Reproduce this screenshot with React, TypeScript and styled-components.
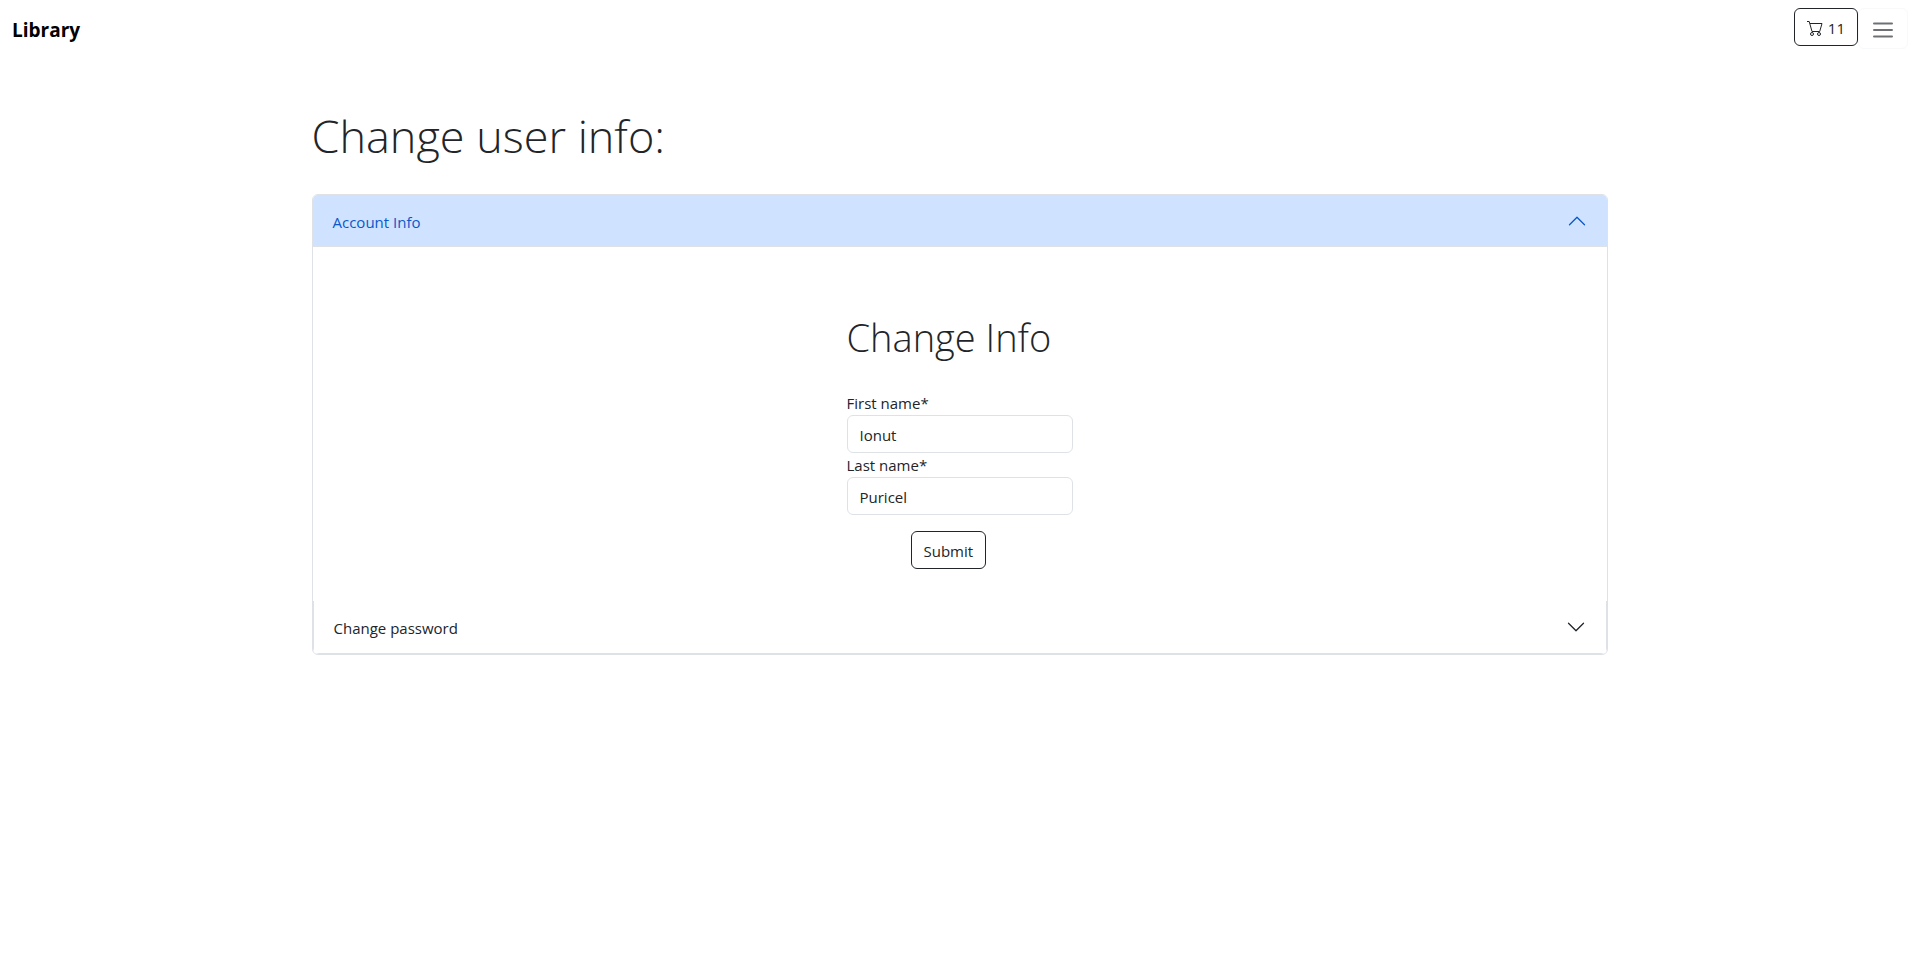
import React, { useState } from "react";
import styled, { createGlobalStyle } from "styled-components";

const GlobalStyle = createGlobalStyle`
  *, *::before, *::after { box-sizing: border-box; }
  body {
    margin: 0;
    background: #fff;
    color: #212529;
    font-family: "Segoe UI", "Open Sans", "Noto Sans", sans-serif;
    font-size: 15px;
    line-height: 24px;
  }
  button, input { font: inherit; color: inherit; }
`;

const Navbar = styled.nav`
  display: flex;
  align-items: flex-start;
  justify-content: space-between;
  padding: 8px 11px 8px 12px;
`;

const Brand = styled.a`
  padding: 6px 0 4px;
  color: #000;
  font-size: 19px;
  line-height: 32px;
  font-weight: 700;
  text-decoration: none;
`;

const NavActions = styled.div`
  display: flex;
  align-items: flex-start;
`;

const OutlineButton = styled.button`
  display: inline-flex;
  align-items: center;
  justify-content: center;
  gap: 5px;
  height: 38px;
  padding: 2px 12px 0;
  border: 1px solid #212529;
  border-radius: 6px;
  background: transparent;
  cursor: pointer;
`;

const Toggler = styled.button`
  display: flex;
  align-items: center;
  justify-content: center;
  width: 50px;
  height: 41px;
  padding: 3px 0 0;
  border: 1px solid #f8f9fa;
  border-radius: 6px;
  background: transparent;
  cursor: pointer;
`;

const Container = styled.main`
  max-width: 1320px;
  margin: 0 auto;
  padding: 50px 12px 48px;
`;

const PageTitle = styled.h1`
  margin: 0 0 30px;
  font-size: 45px;
  line-height: 56px;
  font-weight: 300;
`;

const Accordion = styled.div`
  border: 1px solid #dee2e6;
  border-radius: 6px;
  overflow: hidden;
`;

const AccordionHeading = styled.h2`
  margin: 0;
  font-size: 15px;
  font-weight: 400;
`;

const AccordionButton = styled.button<{ $open: boolean }>`
  display: flex;
  align-items: flex-start;
  justify-content: space-between;
  width: 100%;
  padding: 16px 20px 14px;
  border: 0;
  line-height: 22px;
  text-align: left;
  background: ${(p) => (p.$open ? "#cfe2ff" : "#fff")};
  color: ${(p) => (p.$open ? "#0a58ca" : "#212529")};
  box-shadow: ${(p) => (p.$open ? "inset 0 -1px 0 #dee2e6" : "none")};
  cursor: pointer;

  svg { transform: ${(p) => (p.$open ? "rotate(180deg)" : "none")}; }
`;

const NestedItem = styled.div`
  border: 1px solid #dee2e6;
  border-top: 0;
  border-radius: 0 0 6px 6px;
`;

const AccordionBody = styled.div`
  display: flex;
  justify-content: center;
  padding: 66px 20px 32px;
`;

const Form = styled.form`
  display: flex;
  flex-direction: column;
  width: 226px;
`;

const FormTitle = styled.h2`
  margin: 0 0 30px;
  font-size: 38px;
  line-height: 48px;
  font-weight: 300;
`;

const TextInput = styled.input`
  width: 100%;
  height: 38px;
  padding: 7px 12px 5px;
  border: 1px solid #dee2e6;
  border-radius: 6px;
  background: #fff;
`;

const SubmitRow = styled.div`
  display: flex;
  padding: 16px 64px 0;
`;

const Chevron = () => (
  <svg width="20" height="20" viewBox="0 0 16 16" fill="currentColor" aria-hidden="true">
    <path
      fillRule="evenodd"
      d="M1.646 4.646a.5.5 0 0 1 .708 0L8 10.293l5.646-5.647a.5.5 0 0 1 .708.708l-6 6a.5.5 0 0 1-.708 0l-6-6a.5.5 0 0 1 0-.708z"
    />
  </svg>
);

const CartIcon = () => (
  <svg width="16" height="18" viewBox="0 0 16 18" fill="none" stroke="currentColor" aria-hidden="true">
    <path d="M0 2.5h2.2L5 12.5h7.7L15 4.5H3" />
    <circle cx="5" cy="15" r="1.5" />
    <circle cx="12" cy="15" r="1.5" />
  </svg>
);

const MenuIcon = () => (
  <svg width="26" height="24" viewBox="0 0 26 24" fill="none" aria-hidden="true">
    <path stroke="rgba(33,37,41,.65)" strokeLinecap="round" strokeWidth="2" d="M4 5.5h18M4 12h18M4 18.5h18" />
  </svg>
);

export default function App() {
  const [open, setOpen] = useState("info");
  const toggle = (id: string) => setOpen(open === id ? "" : id);

  return (
    <>
      <GlobalStyle />
      <Navbar>
        <Brand href="#">Library</Brand>
        <NavActions>
          <OutlineButton type="button" aria-label="Cart, 11 items">
            <CartIcon />
            11
          </OutlineButton>
          <Toggler type="button" aria-label="Toggle navigation">
            <MenuIcon />
          </Toggler>
        </NavActions>
      </Navbar>
      <Container>
        <PageTitle>Change user info:</PageTitle>
        <Accordion>
          <AccordionHeading>
            <AccordionButton type="button" $open={open === "info"} aria-expanded={open === "info"} onClick={() => toggle("info")}>
              Account Info
              <Chevron />
            </AccordionButton>
          </AccordionHeading>
          {open === "info" && (
            <AccordionBody>
              <Form onSubmit={(e) => e.preventDefault()}>
                <FormTitle>Change Info</FormTitle>
                <label htmlFor="first-name">First name*</label>
                <TextInput id="first-name" type="text" defaultValue="Ionut" />
                <label htmlFor="last-name">Last name*</label>
                <TextInput id="last-name" type="text" defaultValue="Puricel" />
                <SubmitRow>
                  <OutlineButton type="submit">Submit</OutlineButton>
                </SubmitRow>
              </Form>
            </AccordionBody>
          )}
          <NestedItem>
            <AccordionHeading>
              <AccordionButton type="button" $open={open === "password"} aria-expanded={open === "password"} onClick={() => toggle("password")}>
                Change password
                <Chevron />
              </AccordionButton>
            </AccordionHeading>
          </NestedItem>
        </Accordion>
      </Container>
    </>
  );
}
